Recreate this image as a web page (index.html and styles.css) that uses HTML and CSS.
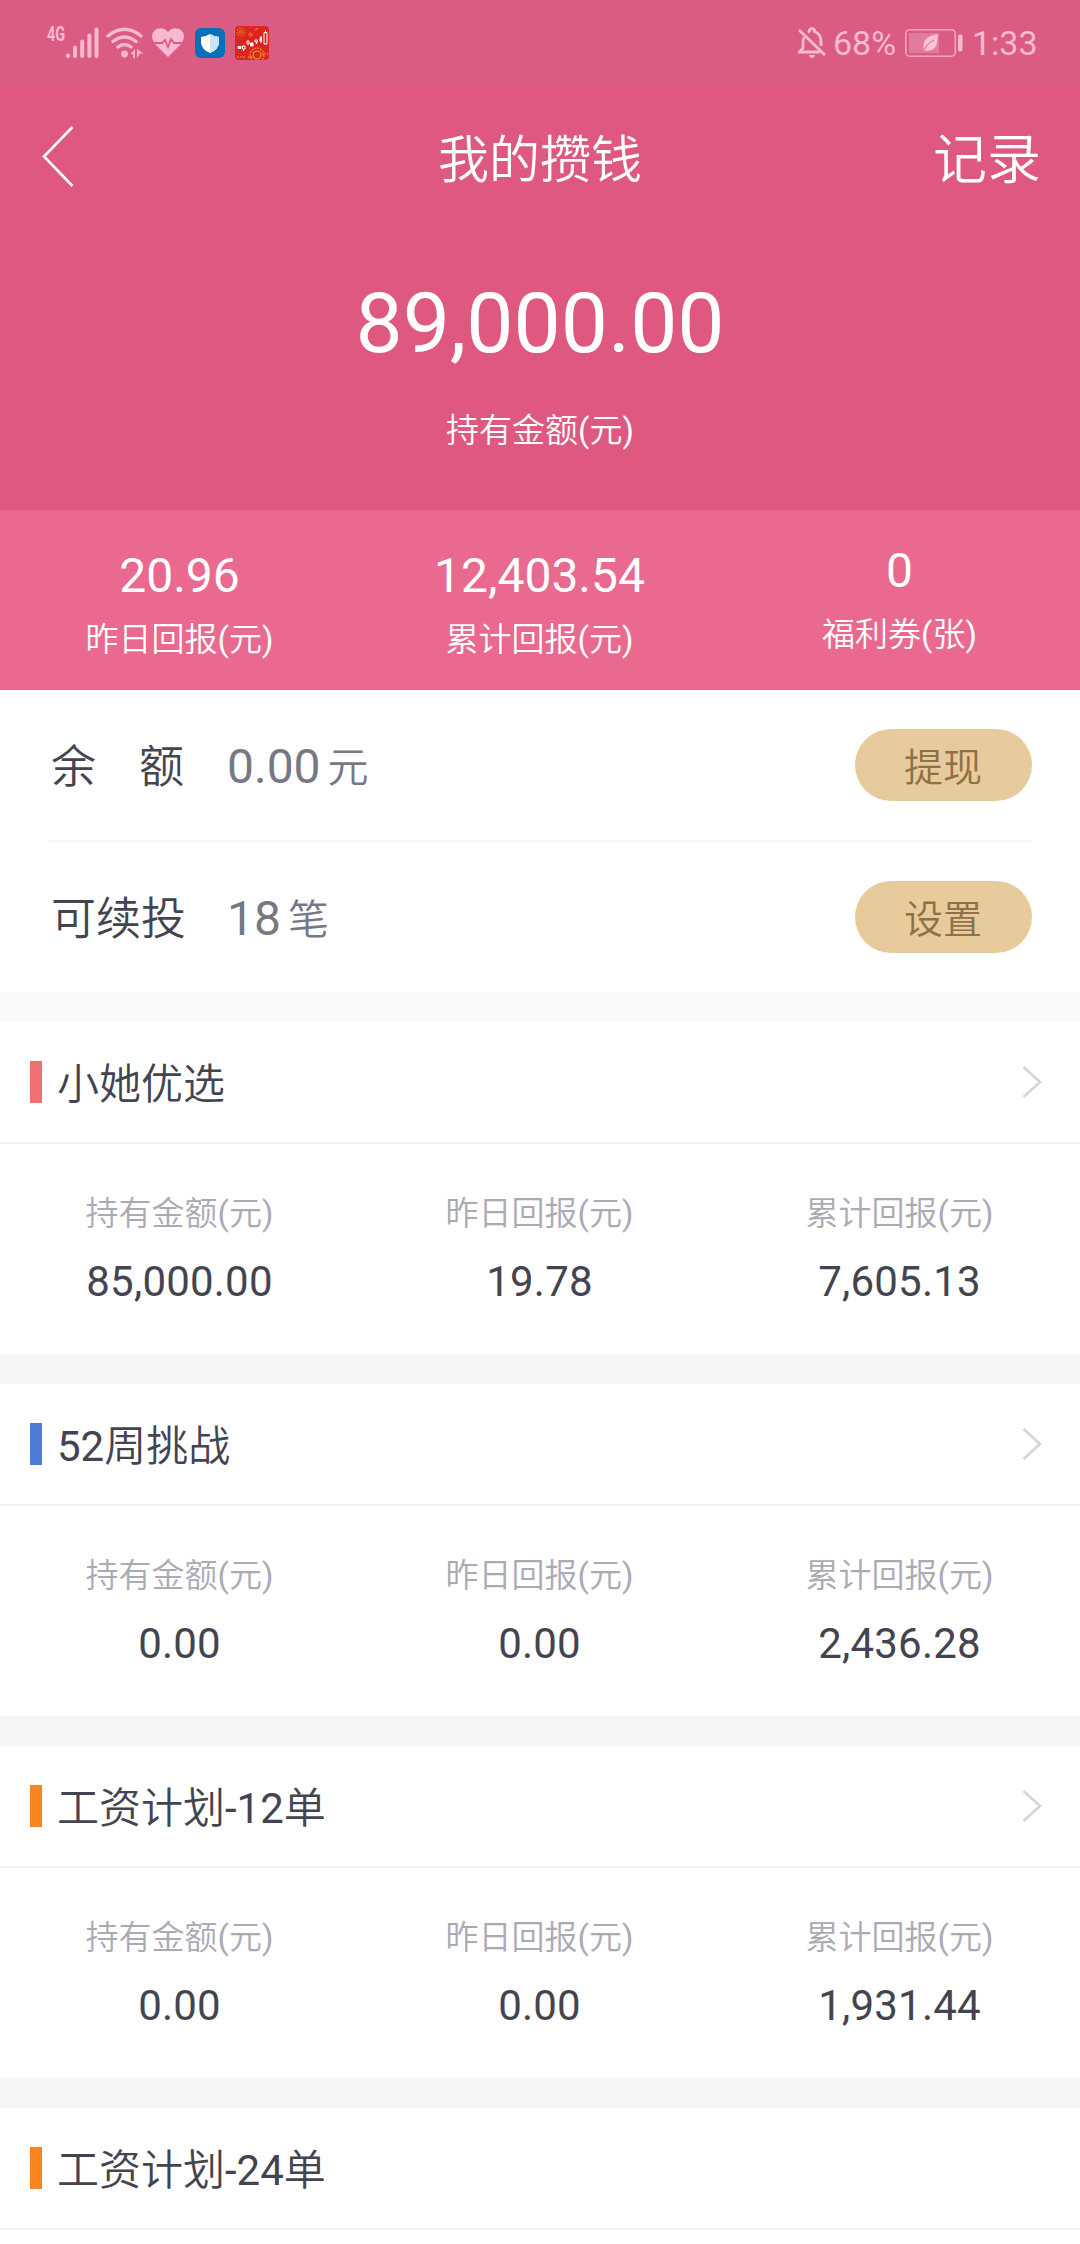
FILE: index.html
```html
<!DOCTYPE html>
<html lang="zh-CN">
<head>
<meta charset="utf-8">
<title>我的攒钱</title>
<link rel="stylesheet" href="styles.css">
</head>
<body>
<div class="screen">
  <header class="top">
    <div class="status">
      <div class="status-left">
        <span class="net">4G</span>
        <svg class="signal" width="34" height="32" viewBox="0 0 34 32"><path d="M3 28.500V29M10 20.500V29M17.200 14.500V29M24.400 8.500V29M31.500 2.500V29" stroke="#f9b9d0" stroke-width="4" stroke-linecap="round" fill="none"/></svg>
        <svg class="wifi" width="38" height="32" viewBox="0 0 38 32"><g fill="none" stroke="#f9b9d0" stroke-width="3.400" stroke-linecap="round"><path d="M2 9Q18.500-4.500 35 9M7 14.500Q18.500 5.500 30 14.500M12 20Q18.500 15 25 20"/></g><circle cx="18.500" cy="27" r="3.400" fill="#f9b9d0"/><path d="M24.500 27L29 22V31H27V27ZM31 22L37.500 26.500H34L31 31Z" fill="#f9b9d0"/></svg>
        <svg class="heart" width="32" height="30" viewBox="0 0 32 30"><path d="M16 29L3 16Q0 12 0 8.500C0 1 10-3 16 4C22-3 32 1 32 8.500Q32 12 29 16Z" fill="#f9b9d0"/><path d="M0 15H10L13 12L16 19L19 11L22 15H32" fill="none" stroke="#da5c82" stroke-width="1.800"/></svg>
        <svg class="guard" width="30" height="30" viewBox="0 0 30 30"><rect width="30" height="30" rx="6" fill="#0870b8"/><path d="M15 6Q19 8.500 24 9V15Q23 22 15 25Q7 22 6 15V9Q11 8.500 15 6Z" fill="#fff"/><path d="M15 6Q19 8.500 24 9V15Q23 22 15 25Z" fill="#cce3f2"/></svg>
        <svg class="stock" width="34" height="34" viewBox="0 0 34 34"><rect width="34" height="34" rx="4" fill="#dc2520"/><g stroke="#e87a2c" fill="none" stroke-width="1.200"><circle cx="6" cy="6" r="4" stroke-dasharray="1.500 1.200"/><circle cx="6" cy="6" r="1.500"/><circle cx="15.500" cy="8.500" r="1.500"/><path d="M20 4L23 2"/></g><g stroke="#e8a02c" fill="none" stroke-width="1.100"><circle cx="22" cy="29" r="7" stroke-dasharray="2 1"/><circle cx="22" cy="29" r="4"/><path d="M27 29Q30 25 33 29M13 32Q15 29 17 32M2 31H11" stroke-dasharray="2 1"/></g><g stroke="#fff" fill="#fff"><path d="M3 20.500H6V22.500H3Z"/><path d="M7.500 20H10V23H7.500ZM12 15H14V18H12ZM20 14H22.500V16H20ZM29 6.500H32V18H29ZM21.500 16V18M30.500 4.500V6M8.500 23V25" fill="none"/><path d="M15.500 17H18V20H15.500ZM25 12H26.500V15H25ZM26 10V17"/></g></svg>
      </div>
      <div class="status-right">
        <svg class="bell" width="28" height="32" viewBox="0 0 28 32"><g fill="none" stroke="#f9b9d0" stroke-width="2.900"><path d="M1 3L27 28"/><path d="M6 10.500Q5 12.500 5 15V21L1.500 25H22M10 5.500Q11.500 4.500 11.500 3Q14 0 16.500 3V4.500Q23 7 23 15V19"/></g><path d="M11 28H17Q16.500 31 14 31Q11.500 31 11 28Z" fill="#f9b9d0"/></svg>
        <span class="pct">68%</span>
        <svg class="battery" width="58" height="28" viewBox="0 0 58 28"><rect x=".8" y=".8" width="49.500" height="26.400" rx="4" fill="none" stroke="#f6a3bf" stroke-width="1.600"/><rect x="4" y="4" width="30" height="20" fill="#e27c9d"/><rect x="53" y="5.500" width="4.500" height="17" rx="1.800" fill="#f9b9d0"/><path d="M33 5Q22 7 19.500 12Q17.500 17 19 22Q30 23 32 14Z" fill="#f9c4d6"/><path d="M18.500 22.500Q22 14 29 11" stroke="#e27c9d" stroke-width="1.200" fill="none"/></svg>
        <span class="clock">1:33</span>
      </div>
    </div>
    <nav class="nav">
      <svg class="back" width="32" height="62" viewBox="0 0 32 62"><path d="M30.500 1L2 30.500L30.500 60" fill="none" stroke="#fff" stroke-width="2.600"/></svg>
      <h1>我的攒钱</h1>
      <a class="record">记录</a>
    </nav>
    <div class="hero">
      <div class="total">89,000.00</div>
      <div class="caption">持有金额<em>(</em>元<em>)</em></div>
    </div>
  </header>

  <section class="stats">
    <div class="stat"><b>20.96</b><span>昨日回报<em>(</em>元<em>)</em></span></div>
    <div class="stat"><b>12,403.54</b><span>累计回报<em>(</em>元<em>)</em></span></div>
    <div class="stat coupon"><b>0</b><span>福利券<em>(</em>张<em>)</em></span></div>
  </section>

  <section class="account">
    <div class="row"><span class="name spread"><i>余</i><i>额</i></span><span class="value">0.00</span><span class="unit">元</span><button>提现</button></div>
    <div class="row"><span class="name">可续投</span><span class="value">18</span><span class="unit">笔</span><button>设置</button></div>
  </section>

  <section class="plan red">
    <h2><span>小她优选</span><svg width="20" height="34" viewBox="0 0 20 34"><path d="M1.500 2L18 17L1.500 32" fill="none" stroke="#d4d4da" stroke-width="2.600"/></svg></h2>
    <div class="figures">
      <div><span>持有金额<em>(</em>元<em>)</em></span><b>85,000.00</b></div>
      <div><span>昨日回报<em>(</em>元<em>)</em></span><b>19.78</b></div>
      <div><span>累计回报<em>(</em>元<em>)</em></span><b>7,605.13</b></div>
    </div>
  </section>
  <section class="plan blue">
    <h2><span><em>52</em>周挑战</span><svg width="20" height="34" viewBox="0 0 20 34"><path d="M1.500 2L18 17L1.500 32" fill="none" stroke="#d4d4da" stroke-width="2.600"/></svg></h2>
    <div class="figures">
      <div><span>持有金额<em>(</em>元<em>)</em></span><b>0.00</b></div>
      <div><span>昨日回报<em>(</em>元<em>)</em></span><b>0.00</b></div>
      <div><span>累计回报<em>(</em>元<em>)</em></span><b>2,436.28</b></div>
    </div>
  </section>
  <section class="plan orange">
    <h2><span>工资计划<em>-12</em>单</span><svg width="20" height="34" viewBox="0 0 20 34"><path d="M1.500 2L18 17L1.500 32" fill="none" stroke="#d4d4da" stroke-width="2.600"/></svg></h2>
    <div class="figures">
      <div><span>持有金额<em>(</em>元<em>)</em></span><b>0.00</b></div>
      <div><span>昨日回报<em>(</em>元<em>)</em></span><b>0.00</b></div>
      <div><span>累计回报<em>(</em>元<em>)</em></span><b>1,931.44</b></div>
    </div>
  </section>
  <section class="plan orange">
    <h2><span>工资计划<em>-24</em>单</span></h2>
  </section>
</div>
</body>
</html>
```

FILE: styles.css
```css
* { box-sizing: border-box; margin: 0; padding: 0; }
body {
  font-family: Roboto, "Noto Sans CJK SC", sans-serif;
  font-weight: 350;
  background: #fff;
  color: #444450;
}
h1, h2, i { font-weight: inherit; font-style: normal; }
b, em { font-weight: 400; font-style: normal; }
svg { display: block; flex: none; }
.screen { width: 1080px; height: 2244px; overflow: hidden; background: #f5f5f5; }

.top { height: 510px; background: #df5880; color: #fff; }
.status {
  height: 83px; padding: 0 43px 0 47px; background: #da5c82; color: #f9b9d0;
  display: flex; justify-content: space-between; font-weight: 400;
}
.status-left, .status-right { display: flex; align-items: flex-start; }
.net { font-weight: 700; font-size: 20px; line-height: 20px; width: 18px; margin-top: 24px; transform: scaleX(.72); transform-origin: left; }
.signal { margin-top: 27px; }
.wifi { margin: 27px 0 0 7px; }
.heart { margin: 28px 0 0 8px; }
.guard { margin: 28px 0 0 11px; }
.stock { margin: 26px 0 0 10px; }
.bell { margin-top: 27px; }
.pct, .clock { font-size: 34px; line-height: 40px; margin-top: 23px; }
.pct { margin-left: 7px; width: 64px; }
.battery { margin: 29px 0 0 8px; }
.clock { margin-left: 9px; width: 65px; }

.nav {
  height: 152px; padding: 0 39px 0 42px;
  display: grid; grid-template-columns: 199px 1fr 200px; align-items: center;
}
.back { margin-top: -5px; }
.nav h1 { font-size: 51px; line-height: 74px; text-align: center; padding: 4px 2px 0 0; }
.record { font-size: 54px; line-height: 78px; text-align: right; padding-top: 4px; }
.hero { text-align: center; padding-top: 39px; }
.total { font-size: 84px; line-height: 100px; font-weight: 400; }
.caption { font-size: 33px; line-height: 48px; margin-top: 33px; }

.stats { height: 180px; background: #e9698f; color: #fff; display: grid; grid-template-columns: repeat(3, 1fr); }
.stat { display: flex; flex-direction: column; align-items: center; padding: 37px 1px 0 0; }
.stat b { font-size: 48px; line-height: 58px; }
.stat span { font-size: 33px; line-height: 48px; margin-top: 11px; }
.stat.coupon { padding-top: 32px; }

.account { background: #fff; padding: 0 48px; border-bottom: 30px solid #fafafa; height: 332px; }
.row { height: 150px; display: flex; align-items: center; padding-left: 3px; }
.row + .row { height: 152px; border-top: 2px solid #f5f5f5; }
.name { font-size: 45px; line-height: 64px; width: 176px; padding-top: 5px; }
.spread { display: flex; gap: 43px; }
.value { font-size: 48px; line-height: 58px; color: #787884; padding-top: 3px; font-weight: 400; }
.unit { font-size: 41px; line-height: 58px; color: #787884; margin-left: 7px; padding-top: 5px; }
.row button {
  margin-left: auto; width: 177px; height: 72px; border: 0; border-radius: 36px;
  background: #e7cb9c; color: #8f7146; font: inherit; font-size: 39px; line-height: 70px; padding: 4px 1px 0 0;
}

.plan { height: 332px; margin-bottom: 30px; background: #fff; }
.plan h2 {
  height: 122px; border-bottom: 2px solid #f1f1f2; padding: 0 38px 0 30px;
  font-size: 42px; line-height: 60px; display: flex; align-items: center;
}
.plan h2::before { content: ""; width: 12px; height: 42px; margin-right: 15px; background: var(--mark); }
.plan h2 span { padding-top: 5px; }
.plan h2 svg { margin-left: auto; }
.red { --mark: #ee7070; }
.blue { --mark: #4c7bd9; }
.orange { --mark: #f98420; }
.figures { display: grid; grid-template-columns: repeat(3, 1fr); padding-top: 46px; }
.figures div { display: flex; flex-direction: column; align-items: center; padding-right: 1px; }
.figures span { font-size: 33px; line-height: 48px; color: #aaaab5; }
.figures b { font-size: 42px; line-height: 50px; letter-spacing: .2px; margin-top: 19px; }
```
